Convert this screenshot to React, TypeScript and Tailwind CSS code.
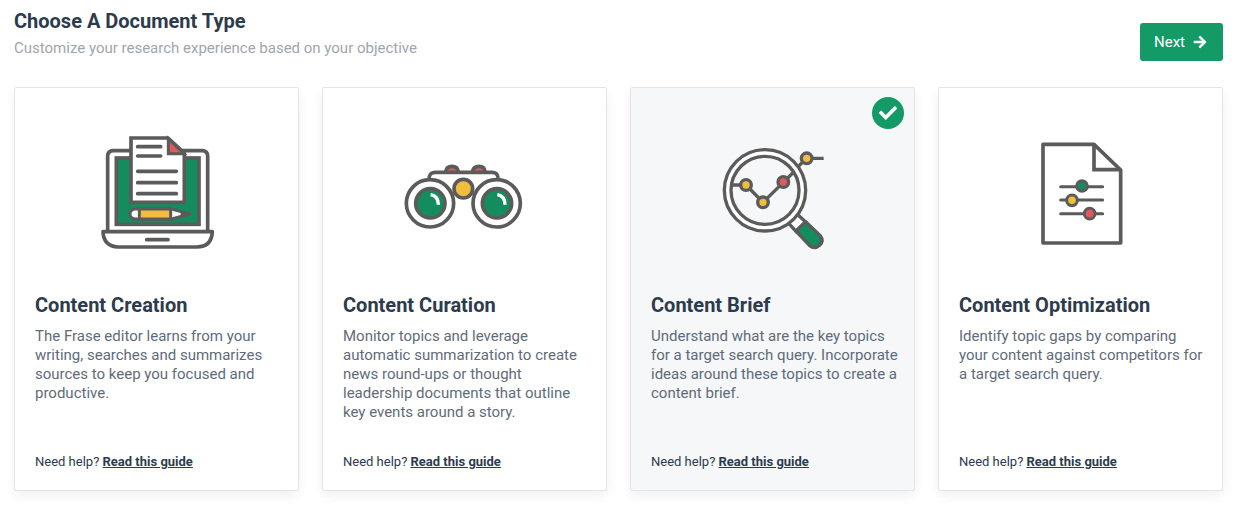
import { useState, type ReactNode } from "react";
import { FaArrowRight, FaCheck } from "react-icons/fa";

const ink = "#5b5b5b";
const green = "#138d5d";
const yellow = "#efbd40";
const red = "#e05a5a";

function LaptopIcon() {
  return (
    <svg aria-hidden="true" viewBox="-3 0 405 405" className="size-[135px]" fill="none" stroke={ink} strokeWidth="11" strokeLinejoin="round" strokeLinecap="round">
      <path d="M53 316V94q0-17 17-17H336q17 0 17 17V316" fill="#fff" />
      <rect x="79" y="99" width="248" height="199" fill={green} strokeLinejoin="miter" />
      <path d="M123 39H234L283 84V232H123Z" fill="#fff" strokeLinejoin="miter" />
      <path d="M235 41V86H282Z" fill={red} strokeLinejoin="miter" strokeWidth="9" />
      <path d="M143 65H212M143 93H212M143 139H259M143 173H259M143 206H259" />
      <path d="M133 252H245L300 267L245 282H133Q120 279 120 267Q120 255 133 252Z" fill="#fff" strokeWidth="9" />
      <path d="M148 252H242V282H148Z" fill={yellow} strokeWidth="9" />
      <path d="M274 260L301 267L274 274Z" fill={ink} strokeWidth="4" />
      <path d="M39 320H367Q365 366 320 366H84Q41 364 39 320Z" fill="#fff" />
      <path d="M170 344H234" />
    </svg>
  );
}

function BinocularsIcon() {
  return (
    <svg aria-hidden="true" viewBox="6 -90 405 405" className="size-[135px]" fill="none" stroke={ink} strokeWidth="11" strokeLinecap="round">
      <path d="M152 50Q154 34 171 34T190 50" fill={red} />
      <path d="M232 50Q235 34 252 34T270 50" fill={red} />
      <path d="M102 76Q100 52 122 52H290Q312 52 309 76" fill="#fff" />
      <circle cx="105" cy="145" r="71" fill="#fff" />
      <circle cx="305" cy="145" r="71" fill="#fff" />
      <circle cx="205" cy="101" r="28" fill={yellow} />
      <circle cx="106" cy="145" r="44" fill={green} />
      <circle cx="306" cy="145" r="44" fill={green} />
      <path d="M107 119Q130 123 130 149M307 119Q330 123 330 149" stroke="#fff" strokeWidth="10" strokeLinecap="butt" />
    </svg>
  );
}

function MagnifierIcon() {
  return (
    <svg aria-hidden="true" viewBox="-14 -45 405 405" className="size-[135px]" fill="none" stroke={ink} strokeWidth="10">
      <path d="M262 222L288 246L259 274L237 250" fill="#fff" />
      <path d="M288 245L331 286Q344 303 330 316Q315 329 300 317L259 273Z" fill={green} strokeLinejoin="round" />
      <circle cx="166" cy="151" r="112" stroke="#fff" strokeWidth="20" />
      <circle cx="166" cy="151" r="122" />
      <circle cx="166" cy="151" r="102" />
      <path d="M66 135H109L160 187L221 127L249 99M267 78L291 55H342" />
      <circle cx="109" cy="135" r="16" fill={yellow} />
      <circle cx="160" cy="187" r="16" fill={yellow} />
      <circle cx="221" cy="126" r="16" fill={red} />
      <circle cx="291" cy="55" r="16" fill={yellow} />
    </svg>
  );
}

function SlidersIcon() {
  return (
    <svg aria-hidden="true" viewBox="-51 -15 405 405" className="size-[135px]" fill="none" stroke={ink} strokeWidth="11" strokeLinejoin="round" strokeLinecap="round">
      <path d="M39 43H192L272 120V339H39Z" fill="#fff" />
      <path d="M192 45V119H270" strokeLinejoin="miter" />
      <path d="M92 170H218M92 210H218M92 251H218" strokeWidth="9" />
      <circle cx="156" cy="168" r="16" fill={green} strokeWidth="9" />
      <circle cx="126" cy="211" r="16" fill={yellow} strokeWidth="9" />
      <circle cx="179" cy="251" r="16" fill={red} strokeWidth="9" />
    </svg>
  );
}

type DocumentType = { id: string; title: string; text: string; icon: ReactNode };

const documentTypes: DocumentType[] = [
  {
    id: "creation",
    title: "Content Creation",
    text: "The Frase editor learns from your writing, searches and summarizes sources to keep you focused and productive.",
    icon: <LaptopIcon />,
  },
  {
    id: "curation",
    title: "Content Curation",
    text: "Monitor topics and leverage automatic summarization to create news round-ups or thought leadership documents that outline key events around a story.",
    icon: <BinocularsIcon />,
  },
  {
    id: "brief",
    title: "Content Brief",
    text: "Understand what are the key topics for a target search query. Incorporate ideas around these topics to create a content brief.",
    icon: <MagnifierIcon />,
  },
  {
    id: "optimization",
    title: "Content Optimization",
    text: "Identify topic gaps by comparing your content against competitors for a target search query.",
    icon: <SlidersIcon />,
  },
];

export default function App() {
  const [selected, setSelected] = useState("brief");

  return (
    <main className="bg-white pt-[9px] pr-[17px] pb-4 pl-3.5 font-[Roboto,sans-serif] text-[#2d3b4e]">
      <header className="flex items-start justify-between">
        <div>
          <h1 className="text-xl leading-6 font-bold">Choose A Document Type</h1>
          <p className="mt-[3px] text-[15px] leading-6 text-[#a0a6af]">Customize your research experience based on your objective</p>
        </div>
        <button type="button" className="mt-3.5 flex h-[38px] items-center gap-2 rounded-[3px] bg-[#149a67] pr-4 pl-3.5 text-[15px] text-white">
          Next
          <FaArrowRight aria-hidden="true" className="size-3.5" stroke="currentColor" strokeWidth="16" />
        </button>
      </header>

      <div className="mt-[26px] grid grid-cols-1 gap-[23px] sm:grid-cols-2 lg:grid-cols-4">
        {documentTypes.map(({ id, title, text, icon }) => {
          const active = id === selected;
          return (
            <section
              key={id}
              className={`relative flex flex-col rounded-[2px] border border-[#e3e5e8] pr-3.5 pb-5 pl-5 shadow-[0_5px_12px_rgba(0,0,0,0.06)] ${active ? "bg-[#f5f7f9]" : "bg-white"}`}
            >
              <label className="block cursor-pointer">
                <input
                  type="radio"
                  name="document-type"
                  value={id}
                  checked={active}
                  onChange={() => setSelected(id)}
                  className="sr-only"
                />
                <span className="flex justify-center pt-[37px] pr-1.5 pb-[33px]">{icon}</span>
                <span className="block text-xl leading-6 font-bold">{title}</span>
              </label>
              <p className="mt-2.5 min-h-[95px] text-[15px] leading-[19px] text-[#5f6b7a]">{text}</p>
              <p className="mt-auto pt-8 text-[13px] leading-4">
                Need help?{" "}
                <a href="#guide" className="font-bold underline">
                  Read this guide
                </a>
              </p>
              {active && (
                <span className="absolute top-[9px] right-2.5 flex size-8 items-center justify-center rounded-full bg-[#149a67] text-white">
                  <FaCheck aria-hidden="true" className="size-[18px]" />
                </span>
              )}
            </section>
          );
        })}
      </div>
    </main>
  );
}
